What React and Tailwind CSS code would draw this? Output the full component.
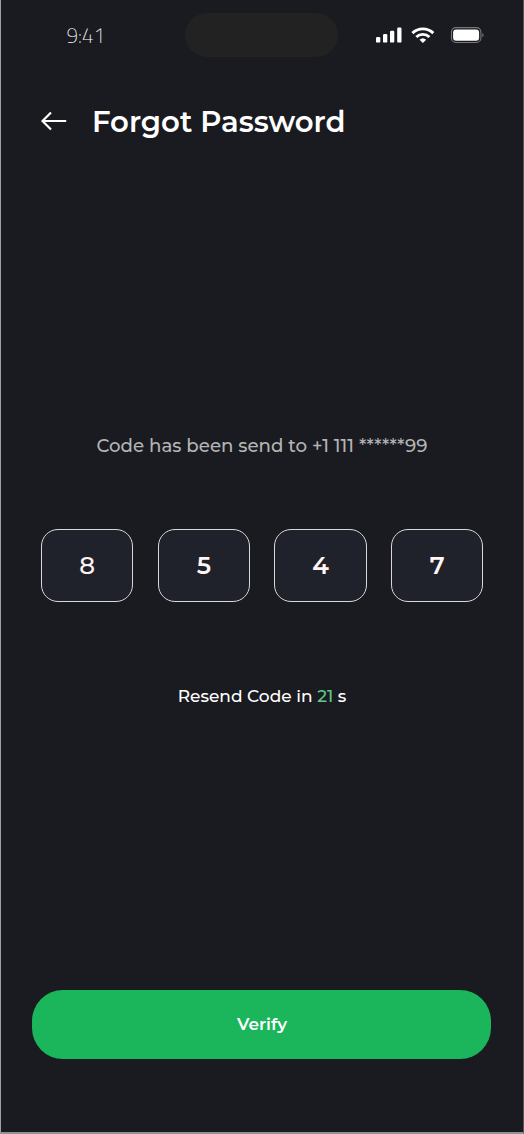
import React from "react";

function StatusIcons() {
  return (
    <svg width="110" height="18" viewBox="375 26 110 18" className="shrink-0" aria-hidden="true">
      <g fill="#fff">
        <rect x="376" y="37" width="4.3" height="5.6" rx="1.2" />
        <rect x="383" y="34" width="4.3" height="8.6" rx="1.2" />
        <rect x="390" y="30.8" width="4.3" height="11.8" rx="1.2" />
        <rect x="397.2" y="27.6" width="4.3" height="15" rx="1.2" />
      </g>
      <g fill="none" stroke="#fff" strokeWidth="2.9">
        <path d="M412.4 33.1a15 15 0 0 1 20.9 0" />
        <path d="M416.3 37a9.5 9.5 0 0 1 13.1 0" />
      </g>
      <path d="M419.5 39.7a5 5 0 0 1 6.7 0l-3.35 3.2z" fill="#fff" />
      <rect x="451.5" y="27.6" width="29.4" height="14.9" rx="4.4" fill="none" stroke="#77787b" strokeWidth="1.1" />
      <rect x="453.1" y="29.4" width="26" height="11.4" rx="3" fill="#fff" />
      <path d="M482.3 32.9c1.7.8 1.7 3.6 0 4.4z" fill="#77787b" />
    </svg>
  );
}

function CodeBox({ value, light }) {
  return (
    <div className="flex h-[73px] w-[92.5px] items-center justify-center rounded-[17px] border border-[#d8d8da] bg-[#20222b] pt-px">
      <span className={(light ? "font-medium" : "font-semibold") + " text-[24.5px] leading-none text-[#fff5f5]"}>
        {value}
      </span>
    </div>
  );
}

export default function App() {
  return (
    <main className="flex h-[1134px] w-[524px] flex-col border-r border-b-2 border-l border-r-[#58595c] border-b-[#929295] border-l-[#a0a0a3] bg-[#1a1b20] font-['Montserrat','Inter',sans-serif] text-white antialiased">
      <header className="flex h-[58px] items-start pt-[13px]">
        <div className="w-[184.4px] pt-[11px] pl-[65.5px] font-['Titillium_Web','Open_Sans',sans-serif] text-[20.5px] leading-6 font-extralight text-white">
          9:41
        </div>
        <div className="h-[44px] w-[152.6px] rounded-full bg-[#222222]" />
        <div className="pt-[13px] pl-[37px]">
          <StatusIcons />
        </div>
      </header>

      <div className="flex h-[128px] items-center pl-[40px]">
        <svg width="26" height="20" viewBox="0 0 26 20" fill="none" stroke="#fff" strokeWidth="2.2" aria-label="Back" className="-mt-[2px]">
          <path d="M10 1.5 1.5 10l8.5 8.5M1.5 10h23.7" />
        </svg>
        <h1 className="ml-[25px] text-[29.15px] leading-9 font-semibold whitespace-nowrap">
          Forgot Password
        </h1>
      </div>

      <section className="mt-[247.5px] flex flex-col items-center">
        <p className="h-6 text-[18.22px] leading-6 font-medium whitespace-nowrap text-[#b4b4b6]">
          Code has been send to +1 111 ******99
        </p>
        <div className="mt-[71.2px] ml-[0.4px] flex gap-[24.2px]">
          <CodeBox value="8" light />
          <CodeBox value="5" />
          <CodeBox value="4" />
          <CodeBox value="7" />
        </div>
        <p className="mt-[82.3px] h-6 text-[17px] leading-6 font-medium whitespace-nowrap">
          Resend Code in <span className="text-[#5fc98c]">21</span> s
        </p>
      </section>

      <button className="mt-auto mb-[73px] ml-[31.4px] flex h-[69px] w-[458.4px] items-center justify-center rounded-[31px] bg-[#1bb65c] pb-px pl-px text-[17px] leading-6 font-semibold">
        Verify
      </button>
    </main>
  );
}
